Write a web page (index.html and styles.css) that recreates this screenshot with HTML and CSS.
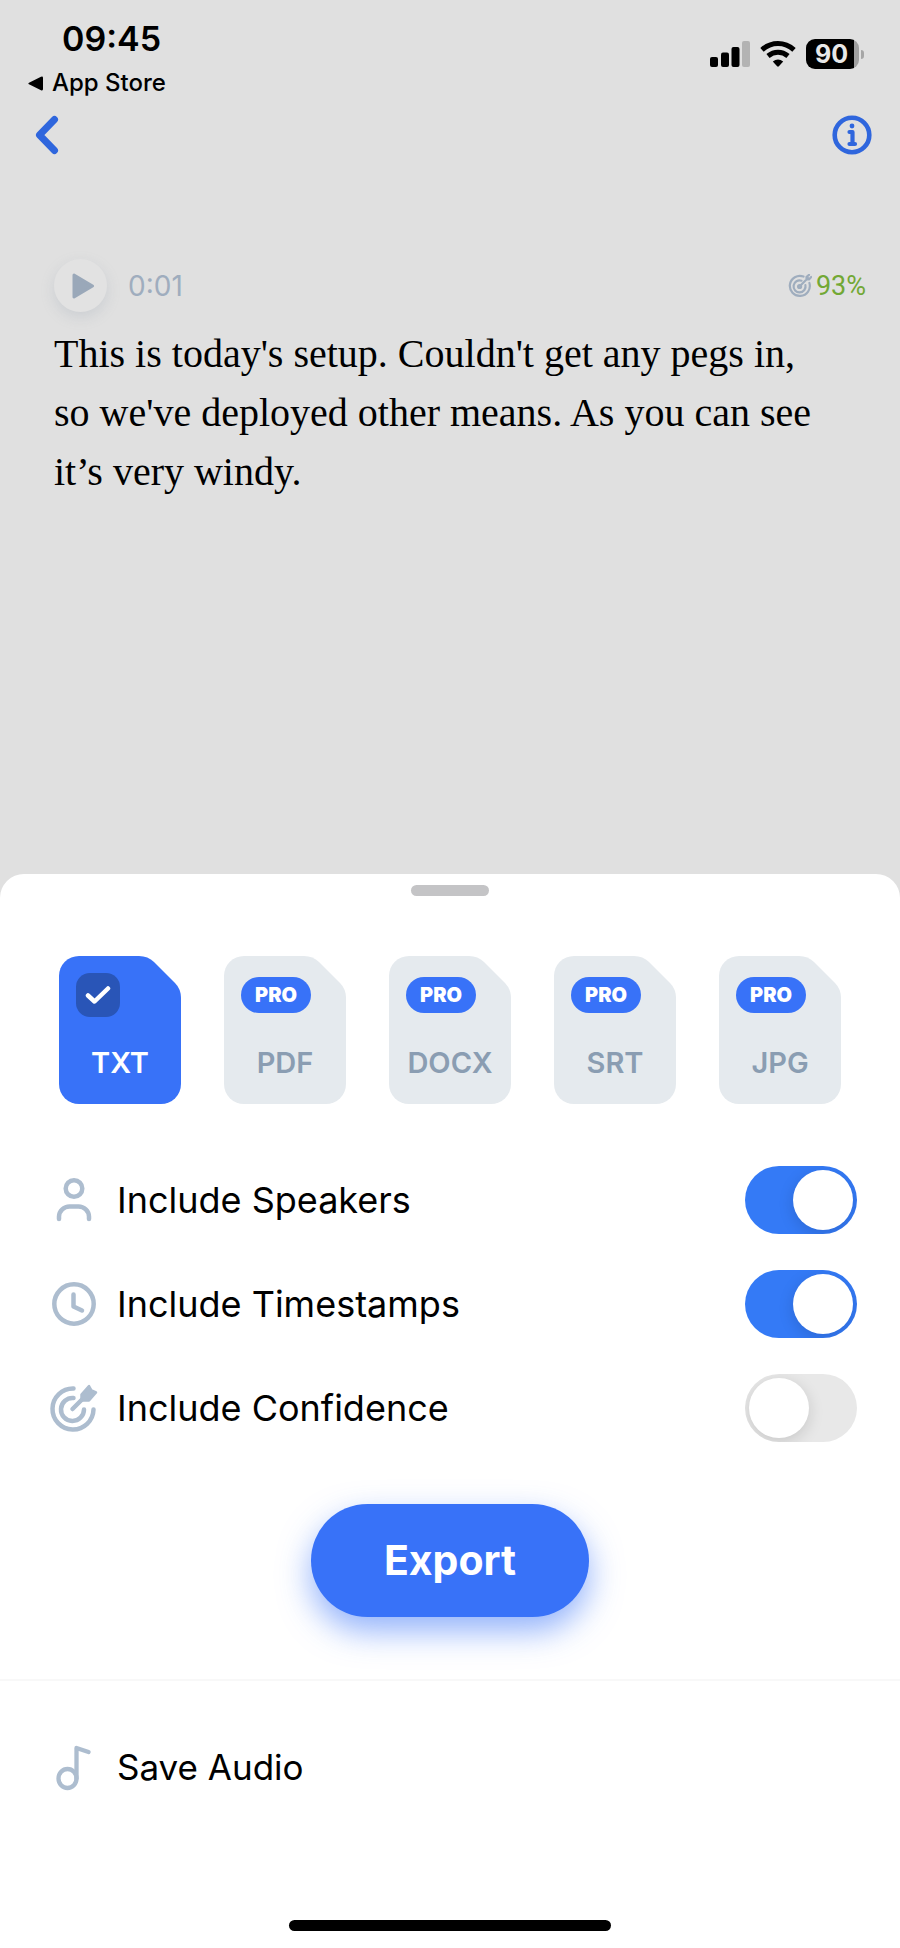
FILE: index.html
```html
<!DOCTYPE html>
<html lang="en">
<head>
<meta charset="utf-8">
<meta name="viewport" content="width=device-width, initial-scale=1">
<title>Export transcript</title>
<link rel="stylesheet" href="styles.css">
</head>
<body>
<div class="screen">
  <header class="status">
    <div class="status-left">
      <span class="clock">09:45</span>
      <a class="return" href="#">
        <svg width="15" height="15" viewBox="0 0 15 15" aria-hidden="true"><path d="M1 6.700 13 .8Q15 0 15 2V13Q15 15 13 14.200L1 8.300Q-.3 7.500 1 6.700Z"/></svg>
        App Store
      </a>
    </div>
    <div class="status-right">
      <svg width="40" height="26" viewBox="0 0 40 26" aria-hidden="true">
        <rect y="16" width="8" height="10" rx="2"/><rect x="11" y="11.500" width="8" height="14.500" rx="2"/><rect x="21.500" y="6" width="8" height="20" rx="2"/><rect x="32" width="8" height="26" rx="2" fill="#b3b3b3"/>
      </svg>
      <svg width="36" height="26" viewBox="0 0 36 26" aria-hidden="true">
        <g fill="none" stroke="#000" stroke-width="5"><path d="M2 8.800Q9 2.500 18 2.500T34 8.800"/><path d="M8 15Q12.500 11.300 18 11.300T28 15"/></g>
        <path d="M12.800 20.400Q18 16.500 23.200 20.400L18.900 25.300Q18 26.100 17.100 25.300Z"/>
      </svg>
      <div class="battery"><span class="battery-level">90</span></div>
    </div>
  </header>

  <nav class="nav">
    <button class="icon-button" type="button" aria-label="Back">
      <svg width="24" height="40" viewBox="0 0 24 40" aria-hidden="true"><path d="M19.500 4.500 4.500 20 19.500 35.500" fill="none" stroke="#2f66dd" stroke-width="7" stroke-linecap="round" stroke-linejoin="round"/></svg>
    </button>
    <button class="icon-button" type="button" aria-label="Information">
      <svg width="40" height="40" viewBox="0 0 40 40" aria-hidden="true">
        <circle cx="20" cy="20" r="17.300" fill="none" stroke="#2f66dd" stroke-width="4.600"/>
        <circle cx="20" cy="11" r="2.400" fill="#2f66dd"/>
        <path d="M17.500 17H20.500V29M17.500 29H23" fill="none" stroke="#2f66dd" stroke-width="4.200" stroke-linecap="round" stroke-linejoin="round"/>
      </svg>
    </button>
  </nav>

  <main class="transcript">
    <div class="segment-head">
      <button class="play" type="button" aria-label="Play">
        <svg width="24" height="26" viewBox="0 0 24 26" aria-hidden="true"><path d="M3 2 21.500 13 3 24Z" fill="#9aa8b9" stroke="#9aa8b9" stroke-width="3" stroke-linejoin="round"/></svg>
      </button>
      <span class="time">0:01</span>
      <span class="confidence">
        <svg width="24" height="24" viewBox="0 0 24 24" fill="none" stroke="#9fadbe" stroke-width="2.200" stroke-linecap="round" aria-hidden="true">
          <path d="M15.500 2.600A10 10 0 1 0 21.400 9"/><path d="M13.500 6.700A6 6 0 1 0 17.400 11"/><circle cx="11.600" cy="12.500" r="1.500"/><path d="M12 12 20 4M18.500 5.500V3L21 .8M18.500 5.500H21L23.200 3"/>
        </svg>
        93%
      </span>
    </div>
    <p class="text">This is today's setup. Couldn't get any pegs in, so we've deployed other means. As you can see it’s very windy.</p>
  </main>

  <section class="sheet" aria-label="Export options">
    <div class="handle"></div>
    <form class="export">
      <div class="formats" role="radiogroup" aria-label="File format">
        <label class="format selected">
          <input class="format-input" type="radio" name="format" value="txt" checked>
          <svg class="shape" viewBox="0 0 122 148" aria-hidden="true"><path d="M20 0H80Q89 0 95 6L116 27Q122 33 122 42V128A20 20 0 0 1 102 148H20A20 20 0 0 1 0 128V20A20 20 0 0 1 20 0Z"/></svg>
          <span class="tick"><svg width="26" height="20" viewBox="0 0 26 20" aria-hidden="true"><path d="M3 10.500 9.500 16.500 23 3.500" fill="none" stroke="#fff" stroke-width="4.500" stroke-linecap="round" stroke-linejoin="round"/></svg></span>
          <span class="format-name">TXT</span>
        </label>
        <label class="format">
          <input class="format-input" type="radio" name="format" value="pdf">
          <svg class="shape" viewBox="0 0 122 148" aria-hidden="true"><path d="M20 0H80Q89 0 95 6L116 27Q122 33 122 42V128A20 20 0 0 1 102 148H20A20 20 0 0 1 0 128V20A20 20 0 0 1 20 0Z"/></svg>
          <span class="pro">PRO</span>
          <span class="format-name">PDF</span>
        </label>
        <label class="format">
          <input class="format-input" type="radio" name="format" value="docx">
          <svg class="shape" viewBox="0 0 122 148" aria-hidden="true"><path d="M20 0H80Q89 0 95 6L116 27Q122 33 122 42V128A20 20 0 0 1 102 148H20A20 20 0 0 1 0 128V20A20 20 0 0 1 20 0Z"/></svg>
          <span class="pro">PRO</span>
          <span class="format-name">DOCX</span>
        </label>
        <label class="format">
          <input class="format-input" type="radio" name="format" value="srt">
          <svg class="shape" viewBox="0 0 122 148" aria-hidden="true"><path d="M20 0H80Q89 0 95 6L116 27Q122 33 122 42V128A20 20 0 0 1 102 148H20A20 20 0 0 1 0 128V20A20 20 0 0 1 20 0Z"/></svg>
          <span class="pro">PRO</span>
          <span class="format-name">SRT</span>
        </label>
        <label class="format">
          <input class="format-input" type="radio" name="format" value="jpg">
          <svg class="shape" viewBox="0 0 122 148" aria-hidden="true"><path d="M20 0H80Q89 0 95 6L116 27Q122 33 122 42V128A20 20 0 0 1 102 148H20A20 20 0 0 1 0 128V20A20 20 0 0 1 20 0Z"/></svg>
          <span class="pro">PRO</span>
          <span class="format-name">JPG</span>
        </label>
      </div>

      <div class="options">
        <div class="option">
          <svg class="line-icon" width="48" height="48" viewBox="0 0 48 48" stroke-width="4.500" aria-hidden="true"><circle cx="24" cy="12.500" r="8.300"/><path d="M9 43V40.500A10.500 10.500 0 0 1 19.500 30.500H28.500A10.500 10.500 0 0 1 39 40.500V43"/></svg>
          <label class="label" for="speakers">Include Speakers</label>
          <input class="switch" id="speakers" type="checkbox" role="switch" checked>
        </div>
        <div class="option">
          <svg class="line-icon" width="48" height="48" viewBox="0 0 48 48" stroke-width="4.500" aria-hidden="true"><circle cx="24" cy="24" r="19.700"/><path d="M23.500 14.500V26.500L32 30.500"/></svg>
          <label class="label" for="timestamps">Include Timestamps</label>
          <input class="switch" id="timestamps" type="checkbox" role="switch" checked>
        </div>
        <div class="option">
          <svg class="line-icon" width="48" height="48" viewBox="0 0 48 48" stroke-width="4.500" aria-hidden="true"><path d="M23.500 4.500A20.500 20.500 0 1 0 43.500 25.500"/><path d="M23.500 14A11.500 11.500 0 1 0 34 25.500"/><path d="M22.500 25 36 11.500"/><path d="M31.500 10.500 39 2 41.500 6.500 46 8.500 39 16.500H31.500Z" fill="#adbdcf" stroke-width="2.500"/></svg>
          <label class="label" for="confidence">Include Confidence</label>
          <input class="switch" id="confidence" type="checkbox" role="switch">
        </div>
      </div>

      <button class="export-button" type="button">Export</button>
    </form>

    <button class="save" type="button">
      <svg class="line-icon" width="48" height="48" viewBox="0 0 48 48" stroke-width="4.300" aria-hidden="true"><ellipse cx="17.500" cy="35.500" rx="9" ry="9.500"/><path d="M26.500 35.500V5L38.500 9"/></svg>
      <span class="label save-label">Save Audio</span>
    </button>
    <div class="home-bar"></div>
  </section>
</div>
</body>
</html>
```

FILE: styles.css
```css
* {
  box-sizing: border-box;
}

body {
  margin: 0;
  background: #e0e0e0;
  color: #000;
  font-family: Inter, "Liberation Sans", sans-serif;
}

button {
  border: 0;
  padding: 0;
  background: none;
  color: inherit;
  font: inherit;
  cursor: pointer;
}

svg {
  display: block;
  flex: none;
}

.screen {
  display: flex;
  flex-direction: column;
  min-height: 100vh;
}

/* Status bar */
.status {
  display: flex;
  justify-content: space-between;
  padding: 18px 36px 0 28px;
}

.status-left {
  display: flex;
  flex-direction: column;
  gap: 8px;
}

.clock {
  padding-left: 34px;
  font-size: 34px;
  font-weight: 600;
  line-height: 42px;
}

.return {
  display: flex;
  align-items: center;
  gap: 9px;
  color: inherit;
  font-size: 24px;
  font-weight: 500;
  line-height: 30px;
  text-decoration: none;
}

.status-right {
  display: flex;
  align-items: center;
  align-self: flex-start;
  gap: 10px;
  padding-top: 21px;
}

.battery {
  display: flex;
  align-items: center;
  gap: 2px;
}

.battery::after {
  content: "";
  width: 3px;
  height: 9px;
  border-radius: 0 5px 5px 0;
  background: #a6a6a6;
}

.battery-level {
  width: 53px;
  padding-right: 2px;
  border-radius: 9px;
  background: linear-gradient(90deg, #000 90%, #a0a0a0 90%);
  color: #e8e8e8;
  font-size: 25px;
  font-weight: 700;
  line-height: 30px;
  text-align: center;
}

/* Navigation */
.nav {
  display: flex;
  justify-content: space-between;
  padding: 17px 28px 0 35px;
}

/* Transcript */
.transcript {
  padding: 104px 34px 0 54px;
}

.segment-head {
  display: flex;
  align-items: center;
}

.play {
  display: grid;
  place-items: center;
  width: 53px;
  height: 53px;
  padding-left: 4px;
  border-radius: 50%;
  background: #e2e2e2;
  box-shadow: 0 5px 14px rgba(130, 145, 165, 0.22);
}

.time {
  padding-left: 21px;
  color: #9fadbe;
  font-size: 28px;
  line-height: 36px;
}

.confidence {
  display: flex;
  align-items: center;
  gap: 4px;
  margin-left: auto;
  color: #72a835;
  font-family: Roboto, sans-serif;
  font-size: 27px;
  line-height: 36px;
}

.text {
  margin: 12px 46px 40px 0;
  font-family: "Liberation Serif", serif;
  font-size: 40px;
  line-height: 59px;
}

/* Bottom sheet */
.sheet {
  display: flex;
  flex-direction: column;
  margin-top: auto;
  padding: 11px 0 17px;
  border-radius: 24px 24px 0 0;
  background: #fff;
}

.handle {
  align-self: center;
  width: 78px;
  height: 11px;
  border-radius: 6px;
  background: #c4c4c6;
}

.export {
  display: flex;
  flex-direction: column;
  padding-bottom: 62px;
  border-bottom: 2px solid #f8f8f8;
}

.formats {
  display: flex;
  justify-content: space-between;
  padding: 60px 59px 0;
}

.format {
  position: relative;
  display: flex;
  flex-direction: column;
  justify-content: space-between;
  width: 122px;
  height: 148px;
  padding: 21px 0 23px;
  color: #8a9db2;
  cursor: pointer;
}

.format-input {
  position: absolute;
  inset: 0;
  width: 100%;
  height: 100%;
  margin: 0;
  opacity: 0;
}

.shape {
  position: absolute;
  inset: 0;
  fill: #e5eaee;
}

.selected {
  padding-top: 17px;
  color: #fff;
}

.selected .shape {
  fill: #3872f8;
}

.tick,
.pro,
.format-name {
  position: relative;
}

.tick {
  display: grid;
  place-items: center;
  width: 44px;
  height: 44px;
  margin-left: 17px;
  border-radius: 14px;
  background: #2955b7;
}

.pro {
  width: 70px;
  margin-left: 17px;
  border-radius: 18px;
  background: #3872f8;
  color: #fff;
  font-size: 20px;
  font-weight: 900;
  line-height: 36px;
  text-align: center;
}

.format-name {
  font-size: 29px;
  font-weight: 600;
  line-height: 36px;
  text-align: center;
}

.options {
  display: flex;
  flex-direction: column;
  gap: 36px;
  padding: 62px 43px 0 50px;
}

.option {
  display: flex;
  align-items: center;
}

.line-icon {
  fill: none;
  stroke: #adbdcf;
  stroke-linecap: round;
  stroke-linejoin: round;
}

.label {
  padding-left: 19px;
  font-size: 36px;
  line-height: 48px;
}

.switch {
  width: 112px;
  height: 68px;
  margin: 0 0 0 auto;
  padding: 4px;
  border-radius: 34px;
  background: #e8e8e8;
  overflow: hidden;
  appearance: none;
  cursor: pointer;
}

.switch::before {
  content: "";
  display: block;
  width: 60px;
  height: 60px;
  border-radius: 50%;
  background: #fff;
  box-shadow: 0 4px 16px rgba(0, 0, 0, 0.14);
}

.switch:checked {
  background: #347af6;
}

.switch:checked::before {
  margin-left: auto;
}

.export-button {
  align-self: center;
  width: 278px;
  margin-top: 62px;
  border-radius: 57px;
  background: #3872f8;
  box-shadow: 0 14px 32px rgba(56, 114, 248, 0.55);
  color: #fff;
  font-size: 41px;
  font-weight: 700;
  line-height: 113px;
}

.save {
  display: flex;
  align-items: center;
  padding: 62px 50px 0;
}

.save-label {
  font-size: 35px;
}

.home-bar {
  align-self: center;
  width: 322px;
  height: 11px;
  margin-top: 129px;
  border-radius: 6px;
  background: #000;
}
```
